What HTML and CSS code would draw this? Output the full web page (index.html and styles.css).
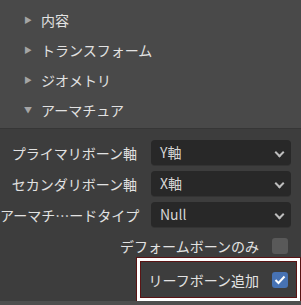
FILE: index.html
```html
<!DOCTYPE html>
<html lang="ja">

<head>
    <meta charset="UTF-8">
    <title>アーマチュア</title>
    <link rel="stylesheet" href="styles.css">
</head>

<body>
    <div class="panels">
        <div class="panel-head"><span class="arrow">&#9654;</span>内容</div>
        <div class="panel-head"><span class="arrow">&#9654;</span>トランスフォーム</div>
        <div class="panel-head"><span class="arrow">&#9654;</span>ジオメトリ</div>
        <div class="panel-head"><span class="arrow open">&#9660;</span>アーマチュア</div>
    </div>

    <div class="props">
        <div class="prop">
            <div class="label">プライマリボーン軸</div>
            <div class="select">Y軸<span class="chev"></span></div>
        </div>
        <div class="prop">
            <div class="label">セカンダリボーン軸</div>
            <div class="select">X軸<span class="chev"></span></div>
        </div>
        <div class="prop">
            <div class="label">アーマチ…ードタイプ</div>
            <div class="select">Null<span class="chev"></span></div>
        </div>
        <div class="check-row">
            <span>デフォームボーンのみ</span>
            <span class="box"></span>
        </div>
        <div class="highlight">
            <div class="check-row inner">
                <span>リーフボーン追加</span>
                <span class="box checked">
                    <svg width="12" height="10" viewBox="0 0 12 10">
                        <path d="M1.5 5 L4.5 8 L10.5 1.5" fill="none" stroke="#fff" stroke-width="2" />
                    </svg>
                </span>
            </div>
        </div>
    </div>
    <div class="footer"></div>
</body>

</html>
```

FILE: styles.css
```css
body {
    margin: 0;
    background-color: #3d3d3d;
    font-family: "Noto Sans CJK JP", "Noto Sans", sans-serif;
    font-size: 14px;
    color: #e2e2e2;
    width: 301px;
    height: 305px;
    overflow: hidden;
}

.panels {
    background-color: #494949;
    padding: 5px 0 3px;
    border-bottom: 1px solid #363636;
}

.panel-head {
    height: 30px;
    line-height: 30px;
    display: flex;
    align-items: center;
    padding-left: 24px;
}

.arrow {
    font-size: 8px;
    color: #a5a5a5;
    width: 17px;
}

.props {
    padding: 8px 10px 0 0;
    height: 164px;
}

.prop {
    height: 31px;
    display: flex;
    align-items: center;
}

.label {
    width: 137px;
    text-align: right;
    white-space: nowrap;
}

.select {
    margin-left: 14px;
    flex: 1;
    height: 25px;
    line-height: 25px;
    background-color: #282828;
    border-radius: 4px;
    box-shadow: 0 1px 0 #333;
    padding-left: 9px;
    color: #d6d6d6;
    position: relative;
}

.chev {
    position: absolute;
    right: 8px;
    top: 9px;
    width: 5px;
    height: 5px;
    border-right: 2px solid #bdbdbd;
    border-bottom: 2px solid #bdbdbd;
    transform: rotate(45deg);
}

.check-row {
    height: 31px;
    display: flex;
    align-items: center;
    justify-content: flex-end;
    padding-right: 3px;
}

.check-row span:first-child {
    margin-right: 13px;
}

.box {
    width: 16px;
    height: 16px;
    border-radius: 3px;
    background-color: #595959;
    display: flex;
    align-items: center;
    justify-content: center;
}

.box.checked {
    background-color: #4772b3;
}

.highlight {
    margin: -4px -10px 0 136px;
    border: 1px solid #5a1414;
    box-shadow: inset 0 0 0 3px #ffffff, inset 0 0 0 4px #5a1414;
    height: 43px;
    display: flex;
    align-items: center;
}

.highlight .inner {
    flex: 1;
    padding-right: 12px;
}

.footer {
    height: 5px;
    background-color: #4e4e4e;
}
```
